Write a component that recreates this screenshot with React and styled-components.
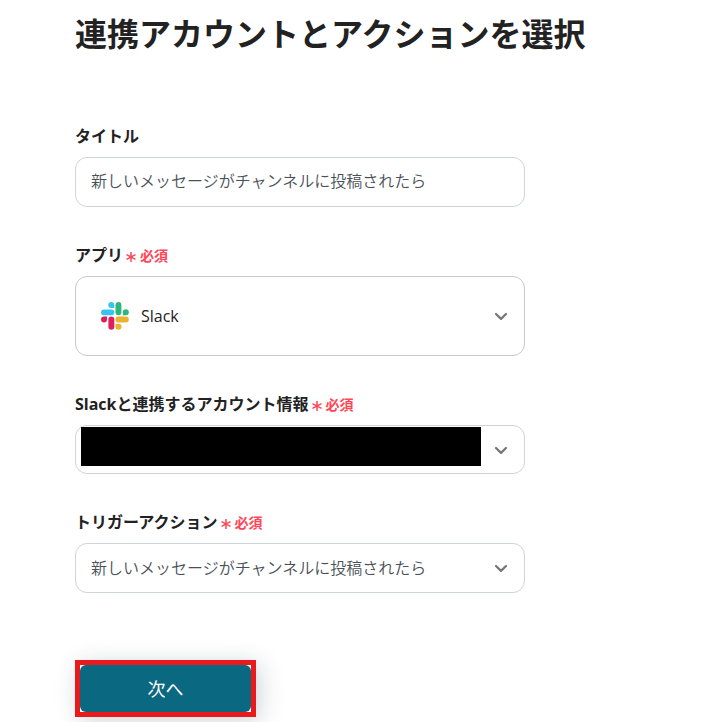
import styled, { createGlobalStyle } from 'styled-components'

const GlobalStyle = createGlobalStyle`
    * {
        box-sizing: border-box;
    }

    body {
        margin: 0;
        background-color: #fff;
        color: #222;
        font-family: 'Open Sans', 'Noto Sans CJK JP', sans-serif;
        font-size: 16px;
    }
`

const Page = styled.main`
    padding: 10px 75px 5px;
`

const Title = styled.h1`
    margin: 0 0 66px;
    font-size: 32px;
    line-height: 48px;
    white-space: nowrap;
`

const Form = styled.form`
    max-width: 450px;
`

const Field = styled.div`
    margin-bottom: 36px;
`

const Label = styled.label`
    display: flex;
    align-items: center;
    gap: 3px;
    margin-bottom: 9px;
    font-size: 16px;
    font-weight: 700;
    line-height: 24px;
    white-space: nowrap;
`

const Required = styled.span`
    display: flex;
    align-items: center;
    gap: 4px;
    padding-top: 2px;
    color: #ff4757;
    font-size: 14px;
    font-weight: 700;
    line-height: 22px;

    svg {
        margin-top: 2px;
    }
`

const TextInput = styled.input`
    display: block;
    width: 100%;
    height: 50px;
    padding: 0 15px 4px;
    border: 1px solid #ced4da;
    border-radius: 12px;
    background-color: #fff;
    color: #495057;
    font: inherit;
    font-weight: 350;
`

const SelectWrapper = styled.div`
    position: relative;
`

const Select = styled.select`
    display: block;
    width: 100%;
    height: ${({ $height }) => $height || 50}px;
    padding: 0 48px 0 ${({ $indent }) => $indent || 15}px;
    border: 1px solid ${({ $border }) => $border || '#ced4da'};
    border-radius: 12px;
    appearance: none;
    background-color: #fff;
    color: ${({ $color }) => $color || '#495057'};
    font: inherit;
    font-weight: ${({ $weight }) => $weight || 350};
`

const Chevron = styled.svg`
    position: absolute;
    top: 0;
    bottom: 0;
    right: 16px;
    margin: auto 0;
    pointer-events: none;
`

const SlackLogo = styled.svg`
    position: absolute;
    top: 0;
    bottom: 0;
    left: 26px;
    margin: auto 0;
    pointer-events: none;
`

const Mask = styled.div`
    position: absolute;
    inset: 2px 44px 8px 6px;
    background-color: #000;
    pointer-events: none;
`

const Highlight = styled.div`
    width: 181px;
    margin-top: 67px;
    border: 5px solid #e81a1c;
    background-color: #fff;
    box-shadow: 4px 4px 24px rgba(20, 50, 70, 0.2);
`

const SubmitButton = styled.button`
    display: block;
    width: 100%;
    height: 47px;
    padding: 0 0 2px;
    border: 0;
    border-radius: 6px;
    background-color: #0b6881;
    color: #fff;
    font: inherit;
    font-size: 18px;
`

const RequiredMark = () => (
    <Required>
        <svg width="10" height="10" viewBox="0 0 10 10" fill="none" stroke="currentColor" strokeWidth="1.5" aria-hidden="true">
            <path d="M5 0v10M0.5 2.6l9 4.8M9.5 2.6l-9 4.8" />
        </svg>
        必須
    </Required>
)

const Arrow = () => (
    <Chevron width="16" height="16" viewBox="0 0 16 16" fill="none" stroke="#777" strokeWidth="2.3" strokeLinecap="round" strokeLinejoin="round" aria-hidden="true">
        <path d="M3 6l5 4.8L13 6" />
    </Chevron>
)

const Logo = () => (
    <SlackLogo width="28" height="28" viewBox="0 0 28 28" aria-hidden="true">
        <g fill="#36c5f0">
            <path d="M10.3 0a3 3 0 0 1 3 3v3h-3a3 3 0 0 1 0-6z" />
            <rect x="0" y="7.4" width="13.3" height="5.9" rx="2.95" />
        </g>
        <g fill="#2eb67d">
            <rect x="14.5" y="0" width="5.9" height="13.3" rx="2.95" />
            <path d="M27.8 10.3a3 3 0 0 1-3 3h-3v-3a3 3 0 0 1 6 0z" />
        </g>
        <g fill="#ecb22e">
            <rect x="14.5" y="14.5" width="13.3" height="5.9" rx="2.95" />
            <path d="M17.5 27.8a3 3 0 0 1-3-3v-3h3a3 3 0 0 1 0 6z" />
        </g>
        <g fill="#e01e5a">
            <path d="M0 17.5a3 3 0 0 1 3-3h3v3a3 3 0 0 1-6 0z" />
            <rect x="7.4" y="14.5" width="5.9" height="13.3" rx="2.95" />
        </g>
    </SlackLogo>
)

const App = () => {
    const message = '新しいメッセージがチャンネルに投稿されたら'

    return (
        <Page>
            <GlobalStyle />
            <Title>連携アカウントとアクションを選択</Title>
            <Form onSubmit={(e) => e.preventDefault()}>
                <Field>
                    <Label htmlFor="title">タイトル</Label>
                    <TextInput id="title" type="text" defaultValue={message} />
                </Field>
                <Field>
                    <Label htmlFor="app">アプリ<RequiredMark /></Label>
                    <SelectWrapper>
                        <Select id="app" $height={80} $indent={65} $border="#c8c8c8" $color="#222" $weight={400}>
                            <option>Slack</option>
                        </Select>
                        <Logo />
                        <Arrow />
                    </SelectWrapper>
                </Field>
                <Field>
                    <Label htmlFor="account">Slackと連携するアカウント情報<RequiredMark /></Label>
                    <SelectWrapper>
                        <Select id="account" $height={49} />
                        <Mask />
                        <Arrow />
                    </SelectWrapper>
                </Field>
                <Field>
                    <Label htmlFor="trigger">トリガーアクション<RequiredMark /></Label>
                    <SelectWrapper>
                        <Select id="trigger">
                            <option>{message}</option>
                        </Select>
                        <Arrow />
                    </SelectWrapper>
                </Field>
                <Highlight>
                    <SubmitButton type="submit">次へ</SubmitButton>
                </Highlight>
            </Form>
        </Page>
    )
}

export default App
